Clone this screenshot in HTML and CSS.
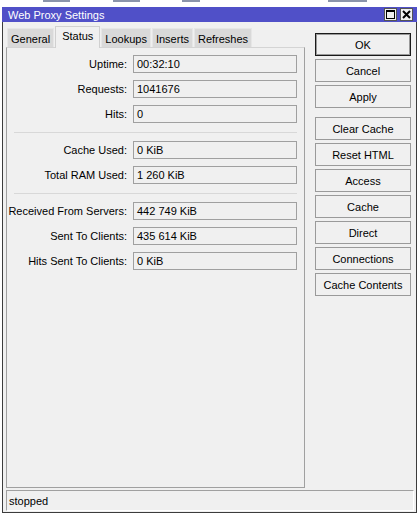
FILE: index.html
```html
<!DOCTYPE html>
<html lang="en">
<head>
    <meta charset="UTF-8">
    <title>Web Proxy Settings</title>
    <link rel="stylesheet" href="styles.css">
</head>
<body>
    <!-- bits of the list window lying behind this one -->
    <div class="desk">
        <span class="frag frag-a"></span>
        <span class="frag frag-b"></span>
        <span class="frag frag-c"></span>
        <span class="frag frag-d"></span>
    </div>

    <div class="window">
        <div class="titlebar">
            <span class="title">Web Proxy Settings</span>
            <div class="tb-buttons">
                <span class="tb-btn">
                    <svg width="11" height="11" viewBox="0 0 11 11">
                        <rect x="1.5" y="1.5" width="8" height="8" fill="none" stroke="#000" stroke-width="1"/>
                        <rect x="1" y="1" width="9" height="2" fill="#000"/>
                    </svg>
                </span>
                <span class="tb-btn">
                    <svg width="11" height="11" viewBox="0 0 11 11">
                        <path d="M2 2 L9 9 M9 2 L2 9" stroke="#000" stroke-width="2"/>
                    </svg>
                </span>
            </div>
        </div>

        <div class="client">
            <div class="main">
                <div class="left">
                    <div class="tabs">
                        <span class="tab">General</span>
                        <span class="tab active">Status</span>
                        <span class="tab">Lookups</span>
                        <span class="tab">Inserts</span>
                        <span class="tab">Refreshes</span>
                    </div>
                    <div class="panel">
                        <div class="group">
                            <div class="row"><label>Uptime:</label><div class="field">00:32:10</div></div>
                            <div class="row"><label>Requests:</label><div class="field">1041676</div></div>
                            <div class="row"><label>Hits:</label><div class="field">0</div></div>
                        </div>
                        <div class="sep"></div>
                        <div class="group">
                            <div class="row"><label>Cache Used:</label><div class="field">0 KiB</div></div>
                            <div class="row"><label>Total RAM Used:</label><div class="field">1 260 KiB</div></div>
                        </div>
                        <div class="sep"></div>
                        <div class="group">
                            <div class="row"><label>Received From Servers:</label><div class="field">442 749 KiB</div></div>
                            <div class="row"><label>Sent To Clients:</label><div class="field">435 614 KiB</div></div>
                            <div class="row"><label>Hits Sent To Clients:</label><div class="field">0 KiB</div></div>
                        </div>
                    </div>
                </div>

                <div class="buttons">
                    <button class="btn default">OK</button>
                    <button class="btn">Cancel</button>
                    <button class="btn">Apply</button>
                    <div class="btn-gap"></div>
                    <button class="btn">Clear Cache</button>
                    <button class="btn">Reset HTML</button>
                    <button class="btn">Access</button>
                    <button class="btn">Cache</button>
                    <button class="btn">Direct</button>
                    <button class="btn">Connections</button>
                    <button class="btn">Cache Contents</button>
                </div>
            </div>

            <div class="statusbar">stopped</div>
        </div>
    </div>
</body>
</html>
```

FILE: styles.css
```css
:root {
    --face: #f0f0f0;
    --edge: #a0a0a0;
    --title: #5050c8;
    --frame: #3c3c3c;
}
* { box-sizing: border-box; }
body {
    margin: 0;
    background: #fff;
    font-family: 'Liberation Sans', Arial, sans-serif;
    font-size: 11px;
    color: #000;
}
.desk {
    height: 7px;
    display: flex;
    align-items: flex-start;
}
.frag {
    height: 2px;
    background: #5a6788;
    opacity: 0.7;
}
.frag-a { margin-left: 43px; width: 27px; }
.frag-b { margin-left: 43px; width: 27px; }
.frag-c { margin-left: 42px; width: 18px; }
.frag-d { margin-left: 128px; width: 39px; }

.window {
    margin-left: 2px;
    width: 415px;
    height: 506px;
    background: var(--face);
    border: 1px solid var(--frame);
    border-top: none;
    display: flex;
    flex-direction: column;
}
.titlebar {
    height: 15px;
    margin: 0 -1px;
    background: var(--title);
    color: #fff;
    display: flex;
    align-items: center;
    justify-content: space-between;
    padding: 0 4px 0 6px;
}
.title { font-size: 11px; padding-top: 1px; }
.tb-buttons { display: flex; gap: 3px; }
.tb-btn {
    width: 13px;
    height: 13px;
    background: var(--face);
    border: 1px solid #555;
    display: flex;
    align-items: center;
    justify-content: center;
}
.tb-btn svg { display: block; }

.client {
    flex: 1;
    display: flex;
    flex-direction: column;
    padding: 4px 0 1px 3px;
}
.main { display: flex; flex: 1; }
.left { width: 299px; display: flex; flex-direction: column; }

.tabs {
    height: 21px;
    display: flex;
    align-items: flex-end;
    padding-left: 1px;
    position: relative;
    z-index: 1;
}
.tab {
    height: 19px;
    padding: 3px 3px 0 3px;
    margin-right: 1px;
    background: #d9d9d9;
    border: 1px solid #e6e6e6;
    border-bottom: none;
    line-height: 14px;
}
.active {
    height: 22px;
    margin-bottom: -1px;
    padding: 2px 6px 0 6px;
    background: var(--face);
    border-color: #d0d0d0;
}

.panel {
    flex: 1;
    border: 1px solid var(--edge);
    border-top-color: #d4d4d4;
    padding: 7px 7px 0 0;
}
.group { display: flex; flex-direction: column; gap: 7px; }
.row { display: flex; align-items: center; height: 18px; }
.row label {
    width: 121px;
    text-align: right;
    padding-right: 1px;
}
.field {
    margin-left: 5px;
    flex: 1;
    height: 18px;
    border: 1px solid var(--edge);
    padding-left: 3px;
    line-height: 16px;
    white-space: nowrap;
}
.sep {
    height: 1px;
    background: #d8d8d8;
    margin: 9px 0 8px 7px;
}

.buttons {
    margin: 7px 0 0 10px;
    width: 96px;
    display: flex;
    flex-direction: column;
    gap: 3px;
}
.btn {
    height: 23px;
    padding: 0;
    background: var(--face);
    border: 1px solid #9a9a9a;
    font-family: inherit;
    font-size: 11px;
    color: #000;
}
.btn.default {
    border-color: #1a1a1a;
    box-shadow: inset 0 0 0 1px #9a9a9a;
}
.btn-gap { height: 6px; margin-top: -3px; }

.statusbar {
    margin-top: 2px;
    width: 408px;
    height: 21px;
    border: 1px solid #fff;
    border-top-color: var(--edge);
    border-left-color: var(--edge);
    padding: 2px 0 0 2px;
    line-height: 16px;
}
```
